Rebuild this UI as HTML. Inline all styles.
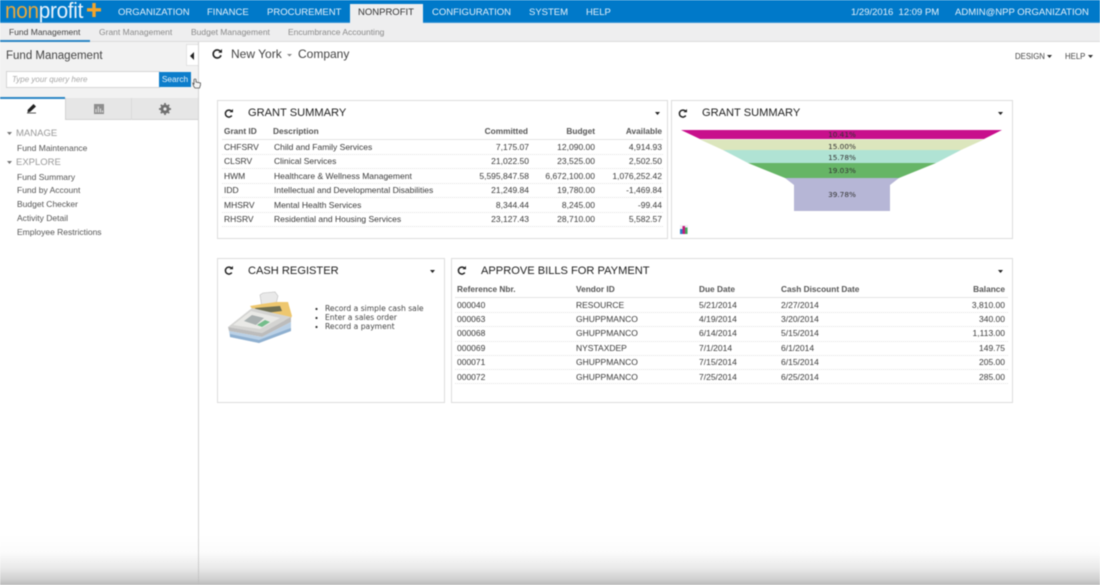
<!DOCTYPE html>
<html>
<head>
<meta charset="utf-8">
<style>
html,body{margin:0;padding:0;background:#fff}
#p{position:relative;width:1100px;height:585px;overflow:hidden;background:#fff;font-family:"Liberation Sans",sans-serif;color:#333;filter:blur(.45px)}
#p div,#p span.a{position:absolute;white-space:nowrap}
.n{top:3px;height:20px;line-height:20px;font-size:9.5px;color:#e3f0fa}
.s{top:23px;height:18px;line-height:18px;font-size:8.5px;color:#8a8a8a}
.c{background:#fff;border:1px solid #dcdcdc;box-sizing:border-box}
.h{font-size:11.1px;color:#222;line-height:14px}
.t{font-size:8.5px;line-height:12px;color:#3a3a3a}
.b{font-weight:bold;color:#555;font-size:8.3px}
.r{text-align:right}
.l{height:0;border-top:1px dotted #e2e2e2}
.m{font-size:8.5px;line-height:12px;color:#555;left:17px}
.g{font-size:9.5px;line-height:12px;color:#999;left:16px}
.p{font-family:"DejaVu Sans",sans-serif;font-size:7.3px;line-height:10px;color:#333;left:794px;width:96px;text-align:center}
svg{position:absolute;overflow:visible}
</style>
</head>
<body>
<div id="p">
<!-- top bars -->
<div style="left:0;top:0;width:1100px;height:23px;background:#0079c9"></div>
<div style="left:0;top:22px;width:1100px;height:1px;background:#3c97d6"></div>
<div style="left:0;top:23px;width:1100px;height:19px;background:#eeeeef;border-bottom:1px solid #dcdcdc;box-sizing:border-box"></div>
<div style="left:5px;top:-1px;font-size:22.5px;line-height:24px;letter-spacing:-.3px;font-weight:normal;transform-origin:0 0;transform:scaleX(.92)"><span style="color:#e8a93c">non</span><span style="color:#e9f3fb">profit</span></div>
<svg style="left:87px;top:3px" width="14" height="14"><path d="M0 6.8H14M7 0V14" stroke="#f2a42a" stroke-width="3.4" fill="none"/></svg>
<div class="n" style="left:118px">ORGANIZATION</div>
<div class="n" style="left:207px">FINANCE</div>
<div class="n" style="left:267px">PROCUREMENT</div>
<div style="left:350px;top:4px;width:73px;height:19px;background:#eeeeef"></div>
<div class="n" style="left:358px;color:#333">NONPROFIT</div>
<div class="n" style="left:432px">CONFIGURATION</div>
<div class="n" style="left:529px">SYSTEM</div>
<div class="n" style="left:586px">HELP</div>
<div class="n" style="left:851px">1/29/2016&nbsp; 12:09 PM</div>
<div class="n" style="left:955px">ADMIN@NPP ORGANIZATION</div>

<div class="s" style="left:9px;color:#444">Fund Management</div>
<div style="left:0;top:40px;width:90px;height:2px;background:#2b86c5"></div>
<div class="s" style="left:99px">Grant Management</div>
<div class="s" style="left:191px">Budget Management</div>
<div class="s" style="left:288px">Encumbrance Accounting</div>

<!-- sidebar -->
<div style="left:0;top:42px;width:198px;height:56px;background:#f2f2f2"></div>
<div style="left:198px;top:42px;width:1px;height:543px;background:#d4d4d4"></div>
<div style="left:6px;top:49px;font-size:11.5px;line-height:14px;color:#444">Fund Management</div>
<div style="left:186px;top:44px;width:12px;height:22px;background:#fff;border:1px solid #e2e2e2;border-right:0;box-sizing:border-box"></div>
<svg style="left:190px;top:52px" width="5" height="8"><path d="M4 0V8L0 4Z" fill="#222"/></svg>
<div style="left:6px;top:71px;width:154px;height:17px;background:#fff;border:1px solid #d4d4d4;box-sizing:border-box"></div>
<div style="left:12px;top:74px;font-size:8px;line-height:12px;font-style:italic;color:#a8a8a8">Type your query here</div>
<div style="left:159px;top:72px;width:32px;height:15px;background:#0c7dcb;color:#e8f3fb;font-size:8.3px;line-height:15px;text-align:center">Search</div>
<svg style="left:192px;top:78px" width="9" height="11"><path d="M2 1.5V6L.8 5.2 1.5 8 3 10H7.5L8.5 7V5L4 4V1.5Q3 .5 2 1.5Z" fill="#f4f4f4" stroke="#555" stroke-width=".8"/></svg>
<!-- tabs -->
<div style="left:65px;top:98px;width:133px;height:22px;background:#e6e6e6;border-bottom:1px solid #d2d2d2;box-sizing:border-box"></div>
<div style="left:131px;top:98px;width:1px;height:22px;background:#dadada"></div>
<div style="left:0;top:97px;width:65px;height:2px;background:#2b86c5"></div>
<div style="left:65px;top:98px;width:1px;height:22px;background:#d2d2d2"></div>
<svg style="left:27px;top:103px" width="10" height="10"><path d="M1 7 6.500 1.500 8.500 3.500 3 8.500 1 9ZM0 10H9" fill="#222" stroke="#222" stroke-width=".7"/></svg>
<svg style="left:94px;top:104px" width="10" height="10"><rect width="10" height="10" fill="#8e8e8e"/><path d="M2 8.500V5M4.300 8.500V2.500M6.500 8.500V4.500M8.500 8.500V6.500" stroke="#ddd" stroke-width="1.100"/></svg>
<svg style="left:159px;top:103px" width="12" height="12"><circle cx="6" cy="6" r="3.400" fill="none" stroke="#707070" stroke-width="2.300"/><path d="M6 0V12M0 6H12M1.800 1.800 10.200 10.200M10.200 1.800 1.800 10.200" stroke="#707070" stroke-width="1.700"/><circle cx="6" cy="6" r="1.600" fill="#e6e6e6"/></svg>
<!-- menu -->
<svg style="left:7px;top:132px" width="5" height="3"><path d="M0 0H5L2.500 3Z" fill="#777"/></svg>
<div class="g" style="top:128px">MANAGE</div>
<div class="m" style="top:141.500px">Fund Maintenance</div>
<svg style="left:7px;top:161px" width="5" height="3"><path d="M0 0H5L2.500 3Z" fill="#777"/></svg>
<div class="g" style="top:157px">EXPLORE</div>
<div class="m" style="top:170.500px">Fund Summary</div>
<div class="m" style="top:184px">Fund by Account</div>
<div class="m" style="top:198px">Budget Checker</div>
<div class="m" style="top:212px">Activity Detail</div>
<div class="m" style="top:226px">Employee Restrictions</div>

<!-- header -->
<svg style="left:212px;top:49px" width="10" height="10"><path d="M8.800 3.200A4 4 0 1 0 9 6.200" fill="none" stroke="#222" stroke-width="1.600"/><path d="M6.300 3.800H10V0Z" fill="#222"/></svg>
<div style="left:231px;top:47px;font-size:12px;line-height:15px;color:#444">New York</div>
<svg style="left:287px;top:54px" width="5" height="3"><path d="M0 0H5L2.500 2.500Z" fill="#888"/></svg>
<div style="left:298px;top:47px;font-size:12px;line-height:15px;color:#444">Company</div>
<div style="left:1015px;top:51px;font-size:7.800px;line-height:11px;color:#444">DESIGN</div>
<svg style="left:1047px;top:55px" width="5" height="3"><path d="M0 0H5L2.500 3Z" fill="#333"/></svg>
<div style="left:1065px;top:51px;font-size:7.800px;line-height:11px;color:#444">HELP</div>
<svg style="left:1088px;top:55px" width="5" height="3"><path d="M0 0H5L2.500 3Z" fill="#333"/></svg>

<!-- card 1 -->
<div class="c" style="left:217px;top:100px;width:451px;height:139px"></div>
<svg style="left:224px;top:109px" width="9" height="9"><path d="M7.800 2.600A3.500 3.500 0 1 0 7.800 6.600" fill="none" stroke="#222" stroke-width="1.500"/><path d="M5.500 3.300H9V0Z" fill="#222"/></svg>
<div class="h" style="left:248px;top:106px">GRANT SUMMARY</div>
<svg style="left:655px;top:112px" width="5" height="3"><path d="M0 0H5L2.500 3Z" fill="#222"/></svg>
<div class="t b" style="left:224px;top:125px">Grant ID</div>
<div class="t b" style="left:273px;top:125px">Description</div>
<div class="t b r" style="left:448px;width:80px;top:125px">Committed</div>
<div class="t b r" style="left:530px;width:65px;top:125px">Budget</div>
<div class="t b r" style="left:600px;width:62px;top:125px">Available</div>
<div style="left:222px;top:139px;width:441px;height:1px;background:#e4e4e4"></div>

<div class="t" style="left:224px;top:141px">CHFSRV</div><div class="t" style="left:274px;top:141px">Child and Family Services</div><div class="t r" style="left:448px;width:81px;top:141px">7,175.07</div><div class="t r" style="left:530px;width:65px;top:141px">12,090.00</div><div class="t r" style="left:600px;width:62px;top:141px">4,914.93</div>
<div class="l" style="left:222px;top:154px;width:441px"></div>
<div class="t" style="left:224px;top:155px">CLSRV</div><div class="t" style="left:274px;top:155px">Clinical Services</div><div class="t r" style="left:448px;width:81px;top:155px">21,022.50</div><div class="t r" style="left:530px;width:65px;top:155px">23,525.00</div><div class="t r" style="left:600px;width:62px;top:155px">2,502.50</div>
<div class="l" style="left:222px;top:168px;width:441px"></div>
<div class="t" style="left:224px;top:170px">HWM</div><div class="t" style="left:274px;top:170px">Healthcare &amp; Wellness Management</div><div class="t r" style="left:448px;width:81px;top:170px">5,595,847.58</div><div class="t r" style="left:530px;width:65px;top:170px">6,672,100.00</div><div class="t r" style="left:600px;width:62px;top:170px">1,076,252.42</div>
<div class="l" style="left:222px;top:183px;width:441px"></div>
<div class="t" style="left:224px;top:184px">IDD</div><div class="t" style="left:274px;top:184px">Intellectual and Developmental Disabilities</div><div class="t r" style="left:448px;width:81px;top:184px">21,249.84</div><div class="t r" style="left:530px;width:65px;top:184px">19,780.00</div><div class="t r" style="left:600px;width:62px;top:184px">-1,469.84</div>
<div class="l" style="left:222px;top:197px;width:441px"></div>
<div class="t" style="left:224px;top:199px">MHSRV</div><div class="t" style="left:274px;top:199px">Mental Health Services</div><div class="t r" style="left:448px;width:81px;top:199px">8,344.44</div><div class="t r" style="left:530px;width:65px;top:199px">8,245.00</div><div class="t r" style="left:600px;width:62px;top:199px">-99.44</div>
<div class="l" style="left:222px;top:212px;width:441px"></div>
<div class="t" style="left:224px;top:213px">RHSRV</div><div class="t" style="left:274px;top:213px">Residential and Housing Services</div><div class="t r" style="left:448px;width:81px;top:213px">23,127.43</div><div class="t r" style="left:530px;width:65px;top:213px">28,710.00</div><div class="t r" style="left:600px;width:62px;top:213px">5,582.57</div>
<div class="l" style="left:222px;top:226px;width:441px"></div>

<!-- card 2 -->
<div class="c" style="left:671px;top:100px;width:342px;height:139px"></div>
<svg style="left:678px;top:109px" width="9" height="9"><path d="M7.800 2.600A3.500 3.500 0 1 0 7.800 6.600" fill="none" stroke="#222" stroke-width="1.500"/><path d="M5.500 3.300H9V0Z" fill="#222"/></svg>
<div class="h" style="left:702px;top:106px">GRANT SUMMARY</div>
<svg style="left:998px;top:112px" width="5" height="3"><path d="M0 0H5L2.500 3Z" fill="#222"/></svg>
<svg style="left:0;top:0" width="1100" height="585">
<path d="M681 130H1002L984 139H700Z" fill="#c80f8c"/>
<path d="M700 139.500H984L961 150H723Z" fill="#dce6bd"/>
<path d="M723 150H961L936 163H748Z" fill="#b0e3d4"/>
<path d="M748 163H936L899 178H785Z" fill="#66b566"/>
<path d="M785 178H899L890 185V211H794V185Z" fill="#b6b6d6"/>
<rect x="680" y="225" width="8" height="9" fill="#f1eef4"/><rect x="680" y="229" width="2.500" height="5" fill="#2f7fc4"/><rect x="682.500" y="226" width="2.500" height="8" fill="#c4197e"/><rect x="685" y="227.500" width="2.500" height="6.500" fill="#45a85c"/>
</svg>
<div class="p" style="top:130px">10.41%</div>
<div class="p" style="top:142px">15.00%</div>
<div class="p" style="top:153px">15.78%</div>
<div class="p" style="top:166px">19.03%</div>
<div class="p" style="top:190px">39.78%</div>

<!-- card 3 -->
<div class="c" style="left:217px;top:258px;width:228px;height:145px"></div>
<svg style="left:224px;top:266px" width="9" height="9"><path d="M7.800 2.600A3.500 3.500 0 1 0 7.800 6.600" fill="none" stroke="#222" stroke-width="1.500"/><path d="M5.500 3.300H9V0Z" fill="#222"/></svg>
<div class="h" style="left:248px;top:264px">CASH REGISTER</div>
<svg style="left:430px;top:270px" width="5" height="3"><path d="M0 0H5L2.500 3Z" fill="#222"/></svg>
<svg style="left:0;top:0" width="1100" height="585">
<path d="M260 295 263 293 275 292 278 296 276 304 262 307Z" fill="#e9e9e9" stroke="#bdbdbd" stroke-width=".6"/>
<path d="M250 306 262 304 276 302 288 302 292 316 290 320 262 322Z" fill="#eec76e"/>
<path d="M255 308 280 306 282 311 257 314Z" fill="#6f6f52"/>
<path d="M228 327 252 308 291 317 262 333Z" fill="#d4d4d2"/>
<path d="M233 325 251 311 280 318 260 329Z" fill="#e9e9e6"/>
<path d="M244 321 252 315 264 318 256 325Z" fill="#a9b0b0"/>
<path d="M257 325 265 320 270 322 262 327Z" fill="#74bd8b"/>
<path d="M228 327 262 333 291 317 291 322 262 337 229 331Z" fill="#bcbcbc"/>
<path d="M229 331 262 337 291 322 291 331 259 343 230 337Z" fill="#b9d0e6"/>
<path d="M230 337 259 343 291 331 291 328 259 340 230 334Z" fill="#8fb0d0"/>
<circle cx="316.500" cy="309" r="1.100" fill="#333"/>
<circle cx="316.500" cy="318" r="1.100" fill="#333"/>
<circle cx="316.500" cy="327" r="1.100" fill="#333"/>
</svg>
<div style="left:325px;top:304px;font-family:'DejaVu Sans',sans-serif;font-size:7.600px;line-height:9.200px;color:#444">Record a simple cash sale<br>Enter a sales order<br>Record a payment</div>

<!-- card 4 -->
<div class="c" style="left:451px;top:258px;width:562px;height:145px"></div>
<svg style="left:457px;top:266px" width="9" height="9"><path d="M7.800 2.600A3.500 3.500 0 1 0 7.800 6.600" fill="none" stroke="#222" stroke-width="1.500"/><path d="M5.500 3.300H9V0Z" fill="#222"/></svg>
<div class="h" style="left:481px;top:264px">APPROVE BILLS FOR PAYMENT</div>
<svg style="left:998px;top:270px" width="5" height="3"><path d="M0 0H5L2.500 3Z" fill="#222"/></svg>
<div class="t b" style="left:457px;top:283px">Reference Nbr.</div>
<div class="t b" style="left:576px;top:283px">Vendor ID</div>
<div class="t b" style="left:699px;top:283px">Due Date</div>
<div class="t b" style="left:781px;top:283px">Cash Discount Date</div>
<div class="t b r" style="left:900px;width:105px;top:283px">Balance</div>
<div style="left:455px;top:297px;width:553px;height:1px;background:#e4e4e4"></div>

<div class="t" style="left:457px;top:299px">000040</div><div class="t" style="left:576px;top:299px">RESOURCE</div><div class="t" style="left:699px;top:299px">5/21/2014</div><div class="t" style="left:781px;top:299px">2/27/2014</div><div class="t r" style="left:900px;width:105px;top:299px">3,810.00</div>
<div class="l" style="left:455px;top:312px;width:553px"></div>
<div class="t" style="left:457px;top:313px">000063</div><div class="t" style="left:576px;top:313px">GHUPPMANCO</div><div class="t" style="left:699px;top:313px">4/19/2014</div><div class="t" style="left:781px;top:313px">3/20/2014</div><div class="t r" style="left:900px;width:105px;top:313px">340.00</div>
<div class="l" style="left:455px;top:326px;width:553px"></div>
<div class="t" style="left:457px;top:327px">000068</div><div class="t" style="left:576px;top:327px">GHUPPMANCO</div><div class="t" style="left:699px;top:327px">6/14/2014</div><div class="t" style="left:781px;top:327px">5/15/2014</div><div class="t r" style="left:900px;width:105px;top:327px">1,113.00</div>
<div class="l" style="left:455px;top:341px;width:553px"></div>
<div class="t" style="left:457px;top:342px">000069</div><div class="t" style="left:576px;top:342px">NYSTAXDEP</div><div class="t" style="left:699px;top:342px">7/1/2014</div><div class="t" style="left:781px;top:342px">6/1/2014</div><div class="t r" style="left:900px;width:105px;top:342px">149.75</div>
<div class="l" style="left:455px;top:355px;width:553px"></div>
<div class="t" style="left:457px;top:356px">000071</div><div class="t" style="left:576px;top:356px">GHUPPMANCO</div><div class="t" style="left:699px;top:356px">7/15/2014</div><div class="t" style="left:781px;top:356px">6/15/2014</div><div class="t r" style="left:900px;width:105px;top:356px">205.00</div>
<div class="l" style="left:455px;top:369px;width:553px"></div>
<div class="t" style="left:457px;top:371px">000072</div><div class="t" style="left:576px;top:371px">GHUPPMANCO</div><div class="t" style="left:699px;top:371px">7/25/2014</div><div class="t" style="left:781px;top:371px">6/25/2014</div><div class="t r" style="left:900px;width:105px;top:371px">285.00</div>
<div class="l" style="left:455px;top:383px;width:553px"></div>

<!-- bottom fade -->
<div style="left:0;top:535px;width:1100px;height:50px;background:linear-gradient(to bottom,rgba(185,185,185,0) 0%,rgba(185,185,185,.05) 35%,rgba(185,185,185,.3) 65%,rgba(185,185,185,.65) 88%,rgba(185,185,185,1) 100%)"></div>
</div>
</body>
</html>
